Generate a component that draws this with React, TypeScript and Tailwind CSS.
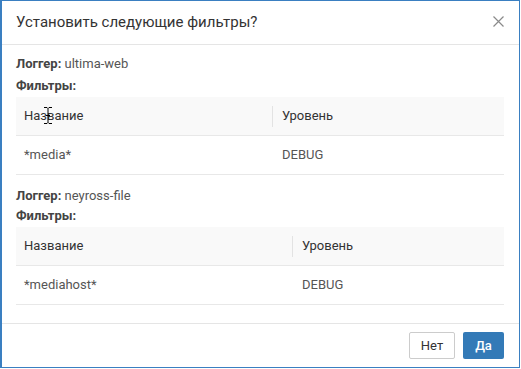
import React from "react";

type Filter = { name: string; level: string };

const loggers: { name: string; col: string; filters: Filter[] }[] = [
  { name: "ultima-web", col: "w-[256px]", filters: [{ name: "*media*", level: "DEBUG" }] },
  { name: "neyross-file", col: "w-[276px]", filters: [{ name: "*mediahost*", level: "DEBUG" }] },
];

function FilterTable({ col, filters, cursor }: { col: string; filters: Filter[]; cursor?: boolean }) {
  return (
    <div className="w-[488px] text-[13px]">
      <div className="relative flex h-[39px] items-center border-b border-[#e8e8e8] bg-[#f9f9f9] text-[#333]">
        <div className={`${col} pl-2`}>Название</div>
        <div className="flex flex-1 items-center">
          <span className="h-[21px] border-l border-[#e3e3e3]" />
          <span className="pl-[9px]">Уровень</span>
        </div>
        {cursor && (
          <svg className="absolute left-[27px] top-[10px]" width="10" height="17" viewBox="0 0 10 17">
            <path d="M1 0.5h3l1 1 1-1h3M5 1.5v14M1 16.5h3l1-1 1 1h3M3 8.5h4" stroke="#000" strokeWidth="1" fill="none" />
          </svg>
        )}
      </div>
      {filters.map((f) => (
        <div key={f.name} className="flex h-[39px] items-center border-b border-[#e8e8e8] text-[#555]">
          <div className={`${col} pl-2`}>{f.name}</div>
          <div className="flex-1 pl-[10px]">{f.level}</div>
        </div>
      ))}
    </div>
  );
}

export default function App() {
  return (
    <div className="h-[369px] w-[521px] bg-white font-['Roboto',sans-serif]">
      <div className="flex h-[368px] w-[520px] flex-col border-t border-r border-b border-l-2 border-[#3a7fc1] bg-white">
        <div className="flex h-[44px] items-center justify-between border-b border-[#e5e5e5] pl-[14px] pr-[15px]">
          <h1 className="text-[15px] text-[#333]">Установить следующие фильтры?</h1>
          <svg width="11" height="11" viewBox="0 0 11 11" className="-mt-[2px]">
            <path d="M0.5 0.5l10 10M10.5 0.5l-10 10" stroke="#8a8a8a" strokeWidth="1.2" />
          </svg>
        </div>

        <div className="flex-1 border-b border-[#e5e5e5] px-[14px] pt-[8px] text-[13px] leading-[22px] text-[#555]">
          {loggers.map((l, i) => (
            <div key={l.name} className={i > 0 ? "mt-[10px]" : ""}>
              <div>
                <span className="font-bold text-[#444]">Логгер:</span> {l.name}
              </div>
              <div className={i > 0 ? "-mt-[2px] font-bold text-[#444]" : "font-bold text-[#444]"}>Фильтры:</div>
              <FilterTable col={l.col} filters={l.filters} cursor={i === 0} />
            </div>
          ))}
        </div>

        <div className="flex h-[43px] items-center justify-end gap-2 pr-[15px]">
          <button className="h-[27px] w-[46px] rounded-[2px] border border-[#ccc] bg-white text-[13px] text-[#333]">
            Нет
          </button>
          <button className="h-[27px] w-[41px] rounded-[2px] bg-[#337ab7] text-[13px] font-medium text-white">
            Да
          </button>
        </div>
      </div>
    </div>
  );
}
